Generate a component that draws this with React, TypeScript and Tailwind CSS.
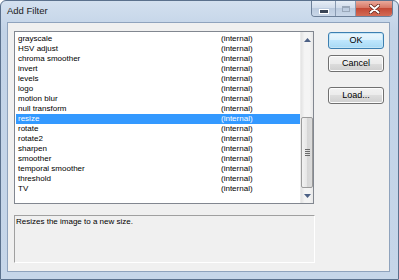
const filters = [
  "grayscale",
  "HSV adjust",
  "chroma smoother",
  "invert",
  "levels",
  "logo",
  "motion blur",
  "null transform",
  "resize",
  "rotate",
  "rotate2",
  "sharpen",
  "smoother",
  "temporal smoother",
  "threshold",
  "TV",
]

const font = { fontFamily: '"Liberation Sans", Arial, sans-serif' }

const DialogButton = ({ label, isDefault }: { label: string; isDefault?: boolean }) => (
  <button
    className={
      "w-[56px] h-[17px] rounded-[3px] border text-[9px] text-black leading-none flex items-center justify-center " +
      (isDefault
        ? "border-[#3c7fb1] bg-[linear-gradient(#eaf6fd_0%,#d9f0fc_50%,#bee6fd_50%,#a7d9f5_100%)] shadow-[inset_0_0_0_1px_#c4e5f6]"
        : "border-[#707070] bg-[linear-gradient(#f2f2f2_0%,#ebebeb_50%,#dddddd_50%,#cfcfcf_100%)] shadow-[inset_0_0_0_1px_#fcfcfc]")
    }
  >
    {label}
  </button>
)

export default function App() {
  return (
    <div
      style={font}
      className="w-[399px] h-[280px] flex flex-col border border-[#5b718d] rounded-t-[6px] bg-[linear-gradient(#d3e0ef,#c2d3e7_30px,#c6d6e9)] overflow-hidden"
    >
      {/* title bar */}
      <div className="h-[21px] flex items-start shrink-0">
        <span className="ml-[6px] mt-[5px] text-[9.5px] text-[#1b1b1b] leading-none">Add Filter</span>
        <div className="ml-auto mr-[5px] flex border border-t-0 border-[#6c7f98] rounded-b-[4px] overflow-hidden h-[16px]">
          <div className="w-[24px] flex items-center justify-center bg-[linear-gradient(#e6edf6,#cfdbea_50%,#bccbdf_50%,#c9d7e8)] border-r border-[#8a9bb2]">
            <div className="w-[8px] h-[3px] bg-[#3a4556] border border-white mt-[5px] box-content" />
          </div>
          <div className="w-[20px] flex items-center justify-center bg-[linear-gradient(#e6edf6,#cfdbea_50%,#bccbdf_50%,#c9d7e8)] border-r border-[#8a9bb2]">
            <div className="w-[8px] h-[6px] border border-[#9aa8ba] border-t-2" />
          </div>
          <div className="w-[36px] flex items-center justify-center bg-[linear-gradient(#e9a99b,#d6725f_50%,#c44a36_50%,#d36b55)]">
            <svg width="11" height="10" viewBox="0 0 11 10">
              <path d="M1.5 1.5 L9.5 8.5 M9.5 1.5 L1.5 8.5" stroke="#5a1e14" strokeWidth="3.4" strokeLinecap="round" />
              <path d="M1.5 1.5 L9.5 8.5 M9.5 1.5 L1.5 8.5" stroke="#ffffff" strokeWidth="2" strokeLinecap="round" />
            </svg>
          </div>
        </div>
      </div>

      {/* body */}
      <div className="flex-1 flex pl-[6px] pr-[8px] pb-[7px]">
        <div className="flex-1 flex border border-[#8fa3bd] bg-[#f0f0f0] pl-[6px] pt-[8px] gap-[13px]">
          {/* left column */}
          <div className="w-[301px] flex flex-col gap-[11px]">
            <div className="w-[300px] h-[173px] border border-[#828790] bg-white flex">
              <div className="flex-1 pt-[2px] pl-[1px] text-[8px] leading-[10px] text-black overflow-hidden">
                {filters.map((name) => (
                  <div
                    key={name}
                    className={
                      "h-[10px] flex pl-[2px] " +
                      (name === "resize" ? "bg-[#3399ff] text-white" : "")
                    }
                  >
                    <span className="w-[203px] shrink-0">{name}</span>
                    <span>(internal)</span>
                  </div>
                ))}
              </div>
              {/* scrollbar */}
              <div className="w-[13px] flex flex-col bg-[linear-gradient(90deg,#e3e3e3,#f4f4f4_30%,#f4f4f4_70%,#e8e8e8)] border-l border-[#ececec]">
                <div className="h-[16px] flex items-center justify-center">
                  <svg width="7" height="4" viewBox="0 0 7 4">
                    <path d="M0 4 L3.5 0 L7 4 Z" fill="#4d6185" />
                  </svg>
                </div>
                <div className="h-[69px]" />
                <div className="h-[71px] mx-[0px] rounded-[2px] border border-[#9b9b9b] bg-[linear-gradient(90deg,#f2f2f2,#e6e6e6_50%,#d6d6d6_50%,#dcdcdc)] flex flex-col items-center justify-center gap-[1px]">
                  <div className="w-[5px] h-[1px] bg-[#6a6a6a]" />
                  <div className="w-[5px] h-[1px] bg-[#6a6a6a]" />
                  <div className="w-[5px] h-[1px] bg-[#6a6a6a]" />
                  <div className="w-[5px] h-[1px] bg-[#6a6a6a]" />
                </div>
                <div className="flex-1 flex items-end justify-center pb-[5px]">
                  <svg width="7" height="4" viewBox="0 0 7 4">
                    <path d="M0 0 L3.5 4 L7 0 Z" fill="#4d6185" />
                  </svg>
                </div>
              </div>
            </div>
            <div className="w-[301px] h-[48px] border border-t-[#a0a0a0] border-l-[#a0a0a0] border-r-white border-b-white text-[8px] leading-[10px] text-black pl-[1px] pt-[1px]">
              Resizes the image to a new size.
            </div>
          </div>

          {/* right column */}
          <div className="flex flex-col pt-[1px]">
            <DialogButton label="OK" isDefault />
            <div className="h-[6px]" />
            <DialogButton label="Cancel" />
            <div className="h-[15px]" />
            <DialogButton label="Load..." />
          </div>
        </div>
      </div>
    </div>
  )
}
